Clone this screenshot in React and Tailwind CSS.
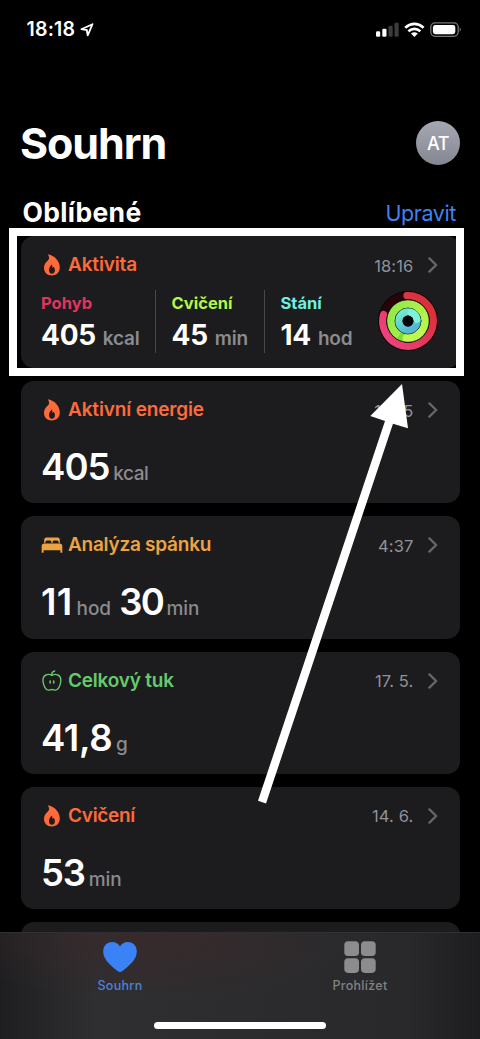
import React from 'react';

const FLAME = 'text-[#ff6a3a]';

const cards = [
  {
    id: 'energy', title: 'Aktivní energie', icon: 'flame', color: FLAME, tracking: 'tracking-[-0.15px]', time: '18:15',
    parts: [{ value: '405', unit: 'kcal', spacing: 'tracking-[-0.9px]', unitSpacing: 'tracking-[-0.4px]', gap: 'ml-[3.5px]' }],
  },
  {
    id: 'sleep', title: 'Analýza spánku', icon: 'bed', color: 'text-[#eda341]', tracking: 'tracking-[-0.25px]', time: '4:37',
    parts: [
      { value: '11', unit: 'hod', spacing: 'tracking-[0.3px]', unitSpacing: 'tracking-[0px]', gap: 'ml-[4px]' },
      { value: '30', unit: 'min', spacing: 'tracking-[-1.5px]', unitSpacing: 'tracking-[0px]', gap: 'ml-[3px]' },
    ],
  },
  {
    id: 'fat', title: 'Celkový tuk', icon: 'apple', color: 'text-[#66ca6a]', tracking: 'tracking-[-0.2px]', time: '17. 5.',
    parts: [{ value: '41,8', unit: 'g', spacing: 'tracking-[-0.3px]', unitSpacing: 'tracking-[0px]', gap: 'ml-[3.5px]' }],
  },
  {
    id: 'exercise', title: 'Cvičení', icon: 'flame', color: FLAME, tracking: 'tracking-[-0.3px]', time: '14. 6.',
    parts: [{ value: '53', unit: 'min', spacing: 'tracking-[-1.2px]', unitSpacing: 'tracking-[-0.1px]', gap: 'ml-[4px]' }],
  },
];

const stats = [
  { label: 'Pohyb', value: '405', unit: 'kcal', color: 'text-[#e0355c]', box: 'w-[114px]' },
  { label: 'Cvičení', value: '45', unit: 'min', color: 'text-[#b4f64a]', box: 'w-[108.5px] border-l border-[#48484b] pl-[15.5px]' },
  { label: 'Stání', value: '14', unit: 'hod', color: 'text-[#6ff0e2]', box: 'w-[110px] border-l border-[#48484b] pl-[16px]' },
];

function CardIcon({ name }) {
  if (name === 'bed') {
    return (
      <svg width="22" height="22" viewBox="0 0 22 22" fill="currentColor">
        <path d="M3.2 9V5.8Q3.2 3.5 5.5 3.5H16.5Q18.8 3.5 18.8 5.8V9H17.6V8Q17.6 6.5 16 6.5H13Q11.6 6.5 11.6 8V9H10.4V8Q10.4 6.5 9 6.5H6Q4.4 6.5 4.4 8V9Z" />
        <path d="M.7 18.2V12Q.7 9.4 3.4 9.4H18.6Q21.3 9.4 21.3 12V18.2Q21.3 18.7 20.7 18.7H20Q19.4 18.7 19.4 18.2V16.2H2.6V18.2Q2.6 18.7 2 18.7H1.3Q.7 18.7 .7 18.2Z" />
      </svg>
    );
  }
  if (name === 'apple') {
    return (
      <svg width="22" height="22" viewBox="0 0 22 22" fill="none" stroke="currentColor" strokeWidth="1.4" strokeLinecap="round" strokeLinejoin="round">
        <path d="M10.9 5.4C9.2 4.4 6.9 4 4.9 5C2.4 6.2 1.6 8.8 2.1 12C2.7 16 4.8 20.1 7.3 20.1C8.6 20.1 9.5 19.5 10.9 19.5C12.3 19.5 13.2 20.1 14.5 20.1C17 20.1 19.1 16 19.7 12C20.2 8.8 19.4 6.2 16.9 5C14.9 4 12.6 4.4 10.9 5.4Z" />
        <path d="M10.7 5.2C10.5 3 11.5 1.5 13.7 1" />
        <path d="M9.1 11.1V12.9M12.7 11.1V12.9" strokeWidth="1.6" />
      </svg>
    );
  }
  return (
    <svg width="22" height="22" viewBox="0 0 22 22" fill="currentColor" fillRule="evenodd">
      <path d="M8 .4C13.8 1.8 18.8 7 18.8 13.6C18.8 18.4 15.6 21.5 10.9 21.5C6.2 21.5 3 18.5 3 14C3 10.8 4.5 8.8 6.4 7.1C8.3 5.3 8.6 3.6 7.4 1.4C7 .7 7.3 .2 8 .4ZM10.4 11C8.7 12.6 8 14.4 8 16.2C8 18.3 9.1 19.7 10.9 19.7C12.8 19.7 13.9 18.3 13.9 16.4C13.9 15 13.5 13.8 12.7 13.1C12.4 12.9 12.1 13 12 13.3C11.9 13.6 11.7 13.8 11.4 13.9C11.5 12.9 11.3 11.9 11 11.1C10.9 10.8 10.7 10.7 10.4 11Z" />
    </svg>
  );
}

function Chevron() {
  return (
    <svg className="ml-[14px]" width="10" height="16" viewBox="0 0 10 16" fill="none" stroke="#66666a" strokeWidth="2.4" strokeLinecap="round" strokeLinejoin="round">
      <path d="M1.4 1.4L8.2 8L1.4 14.6" />
    </svg>
  );
}

function CardHeader({ icon, title, color, tracking, time }) {
  return (
    <div className="flex h-[22px] items-center">
      <span className={`flex items-center ${color}`}>
        <CardIcon name={icon} />
        <span className={`ml-[5px] whitespace-nowrap text-[19px] leading-[22px] font-semibold ${tracking}`}>{title}</span>
      </span>
      <span className="ml-auto whitespace-nowrap pt-[1px] text-[16.5px] leading-[20px] text-[#929297] tracking-[0.15px]">{time}</span>
      <Chevron />
    </div>
  );
}

function Rings() {
  return (
    <svg className="mt-[1px] shrink-0" width="60" height="61" viewBox="-30 -30 60 61" fill="none" strokeLinecap="round">
      <defs>
        <linearGradient id="move" x1="0" y1="1" x2="1" y2="0.2">
          <stop offset="0" stopColor="#f04488" />
          <stop offset="1" stopColor="#d92f35" />
        </linearGradient>
        <linearGradient id="stand" x1="0" y1="0" x2="0.6" y2="1">
          <stop offset="0" stopColor="#73edcf" />
          <stop offset="1" stopColor="#55b7d7" />
        </linearGradient>
        <linearGradient id="exercise" x1="0" y1="0" x2="1" y2="0.4">
          <stop offset="0" stopColor="#8fe84a" />
          <stop offset="1" stopColor="#b5f64b" />
        </linearGradient>
      </defs>
      <circle r="30" fill="#100205" />
      <circle r="25.3" stroke="#270408" strokeWidth="7.5" />
      <path d="M-1 -25.3A25.3 25.3 0 1 1 -24.4 -6.6" stroke="url(#move)" strokeWidth="7.2" />
      <circle r="17.1" stroke="url(#exercise)" strokeWidth="8" />
      <path d="M-3.5 16.8A17.1 17.1 0 0 1 -9 14.6" stroke="#7edc3e" strokeWidth="7.6" strokeLinecap="butt" />
      <path d="M-1.4 17.1A17.1 17.1 0 0 0 12 12.2" stroke="#bdf94e" strokeWidth="7.8" />
      {/* thin seams between the rings */}
      <circle r="21.3" stroke="#1c1206" strokeWidth="0.8" />
      <circle r="13" stroke="#0d1c0d" strokeWidth="0.8" />
      <circle r="9.1" stroke="url(#stand)" strokeWidth="7.2" />
      <path d="M3 -8.6A9.1 9.1 0 0 1 9 -1.6" stroke="#7bf3da" strokeWidth="7" />
      <circle r="5.4" fill="#020607" />
    </svg>
  );
}

function StatusBar() {
  return (
    <div className="flex h-[60px] shrink-0 items-center pl-[26.5px] pr-[18px]">
      <span className="text-[19.5px] leading-none font-semibold tracking-[0.2px]">18:18</span>
      <svg className="ml-[5px]" width="14" height="14" viewBox="0 0 14 14" fill="none" stroke="white" strokeWidth="1.8" strokeLinejoin="round">
        <path d="M12.5 1.2L1.4 6.2L6.8 7L7.7 12.4Z" />
      </svg>
      <svg className="ml-auto" width="86" height="18" viewBox="0 0 86 18">
        <rect x="0" y="10.2" width="4.2" height="5.5" rx="1.3" fill="white" />
        <rect x="6.3" y="7.7" width="4.2" height="8" rx="1.3" fill="white" />
        <rect x="12.5" y="4.7" width="4.2" height="11" rx="1.3" fill="#3c3c3e" />
        <rect x="18.5" y="1.7" width="4.2" height="14" rx="1.3" fill="#3c3c3e" />
        <g fill="none" stroke="white" strokeWidth="2.7">
          <path d="M29.2 6.7Q38.4 -.9 47.6 6.7" />
          <path d="M32.4 10.3Q38.4 5.3 44.4 10.3" />
        </g>
        <path d="M38.4 16L35 12.6Q38.4 9.8 41.8 12.6Z" fill="white" />
        <rect x="54.8" y="1.9" width="27.4" height="13.4" rx="4.2" fill="none" stroke="#77777a" strokeWidth="1.3" />
        <rect x="56.9" y="4" width="22.4" height="9.2" rx="2.4" fill="white" />
        <path d="M83.7 6.3Q86 8.6 83.7 10.9Z" fill="#77777a" />
      </svg>
    </div>
  );
}

export default function App() {
  return (
    <div className="relative flex h-[1039px] w-[480px] flex-col overflow-hidden bg-black font-['Inter','Liberation_Sans',sans-serif] text-white">
      <StatusBar />

      <header className="mt-[59px] flex h-[48px] shrink-0 items-center justify-between pl-[20px] pr-[20px]">
        <h1 className="text-[43px] leading-[48px] font-bold tracking-[-1.1px]">Souhrn</h1>
        <div className="flex h-[44px] w-[44px] items-center justify-center rounded-full bg-linear-to-b from-[#a5a8b3] to-[#858791] text-[18px] font-medium tracking-[-0.5px]">AT</div>
      </header>

      <div className="mt-[28.5px] flex h-[32px] shrink-0 items-center justify-between pl-[22.5px] pr-[24px]">
        <h2 className="text-[26.5px] leading-[32px] font-bold tracking-[0.35px]">Oblíbené</h2>
        <span className="pt-[3px] text-[21.5px] leading-[28px] tracking-[-0.4px] text-[#3f82f0]">Upravit</span>
      </div>

      <main className="mr-[20.5px] ml-[20.5px] mt-[8.5px] flex shrink-0 flex-col gap-[13px]">
        {/* Activity summary */}
        <section className="h-[132px] shrink-0 rounded-[13px] bg-[#1c1c1e] pt-[18px] pr-[22px] pl-[20.5px]">
          <CardHeader icon="flame" title="Aktivita" color={FLAME} tracking="tracking-[-0.15px]" time="18:16" />
          <div className="mt-[14px] flex items-start">
            {stats.map((s) => (
              <div key={s.label} className={`h-[63px] shrink-0 ${s.box}`}>
                <div className={`pt-[3px] text-[16.5px] leading-[20px] font-bold ${s.color}`}>{s.label}</div>
                <div className="mt-[5px] flex items-baseline whitespace-nowrap leading-[34px]">
                  <span className="text-[28px] font-bold tracking-[-0.3px]">{s.value}</span>
                  <span className="ml-[7px] text-[19px] font-semibold tracking-[-0.2px] text-[#8b8b90]">{s.unit}</span>
                </div>
              </div>
            ))}
            <div className="ml-[4.5px]"><Rings /></div>
          </div>
        </section>

        {cards.map((c) => (
          <section key={c.id} className="h-[122.3px] shrink-0 rounded-[13px] bg-[#1c1c1e] pt-[18px] pr-[22px] pl-[20.5px]">
            <CardHeader {...c} />
            <div className="mt-[24px] flex items-baseline whitespace-nowrap leading-[44px]">
              {c.parts.map((p) => (
                <span key={p.unit} className="mr-[8px] flex items-baseline">
                  <span className={`text-[36.5px] font-semibold ${p.spacing}`}>{p.value}</span>
                  <span className={`text-[19px] font-medium text-[#8b8b90] ${p.gap} ${p.unitSpacing}`}>{p.unit}</span>
                </span>
              ))}
            </div>
          </section>
        ))}
        <section className="h-[122px] shrink-0 rounded-[13px] bg-[#1c1c1e]" />
      </main>

      {/* Bottom tab bar */}
      <nav className="absolute inset-x-0 bottom-0 flex h-[107px] flex-col border-t border-[#303033] bg-[radial-gradient(ellipse_200px_70px_at_150px_0px,#38292b_0%,transparent_100%),linear-gradient(90deg,#1e1e20_0%,#2f2f31_20%,#2c2c2e_50%,#29292b_85%,#1d1d1f_100%)]">
        <div className="flex">
          <div className="flex w-1/2 flex-col items-center pt-[8px]">
            <svg width="36" height="32" viewBox="0 0 36 32" fill="#3b82f6">
              <path d="M18 31C16.8 31 15.6 30.2 14.2 29C6.7 23 1.2 17.5 1.2 10.5C1.2 4.8 5 1 10 1C13.6 1 16.4 2.5 18 5.5C19.6 2.5 22.4 1 26 1C31 1 34.8 4.8 34.8 10.5C34.8 17.5 29.3 23 21.8 29C20.4 30.2 19.2 31 18 31Z" />
            </svg>
            <span className="mt-[5px] text-[12.5px] leading-[16px] font-medium tracking-[0.3px] text-[#4b83dc]">Souhrn</span>
          </div>
          <div className="flex w-1/2 flex-col items-center pt-[8px]">
            <svg width="32" height="32" viewBox="0 0 32 32" fill="#8c8c8e">
              <rect x="0.3" y="0.3" width="14.7" height="14.7" rx="3.8" />
              <rect x="17" y="0.3" width="14.7" height="14.7" rx="3.8" />
              <rect x="0.3" y="17.2" width="14.7" height="14.7" rx="3.8" />
              <rect x="17" y="17.2" width="14.7" height="14.7" rx="3.8" />
            </svg>
            <span className="mt-[5px] text-[12.5px] leading-[16px] font-medium tracking-[0.3px] text-[#818184]">Prohlížet</span>
          </div>
        </div>
        <div className="mt-auto mb-[10px] h-[7px] w-[172px] self-center rounded-full bg-white" />
      </nav>

      {/* Highlight frame and arrow over the activity card */}
      <div className="absolute top-[228px] left-[9px] h-[148px] w-[455px] border-[8.5px] border-white" />
      <svg className="absolute inset-0" width="480" height="1039" viewBox="0 0 480 1039" fill="white">
        <path d="M402 384L408 428.3L393 423.7L266 803.5L258 800.8L385 421L370.3 416Z" />
      </svg>
    </div>
  );
}
